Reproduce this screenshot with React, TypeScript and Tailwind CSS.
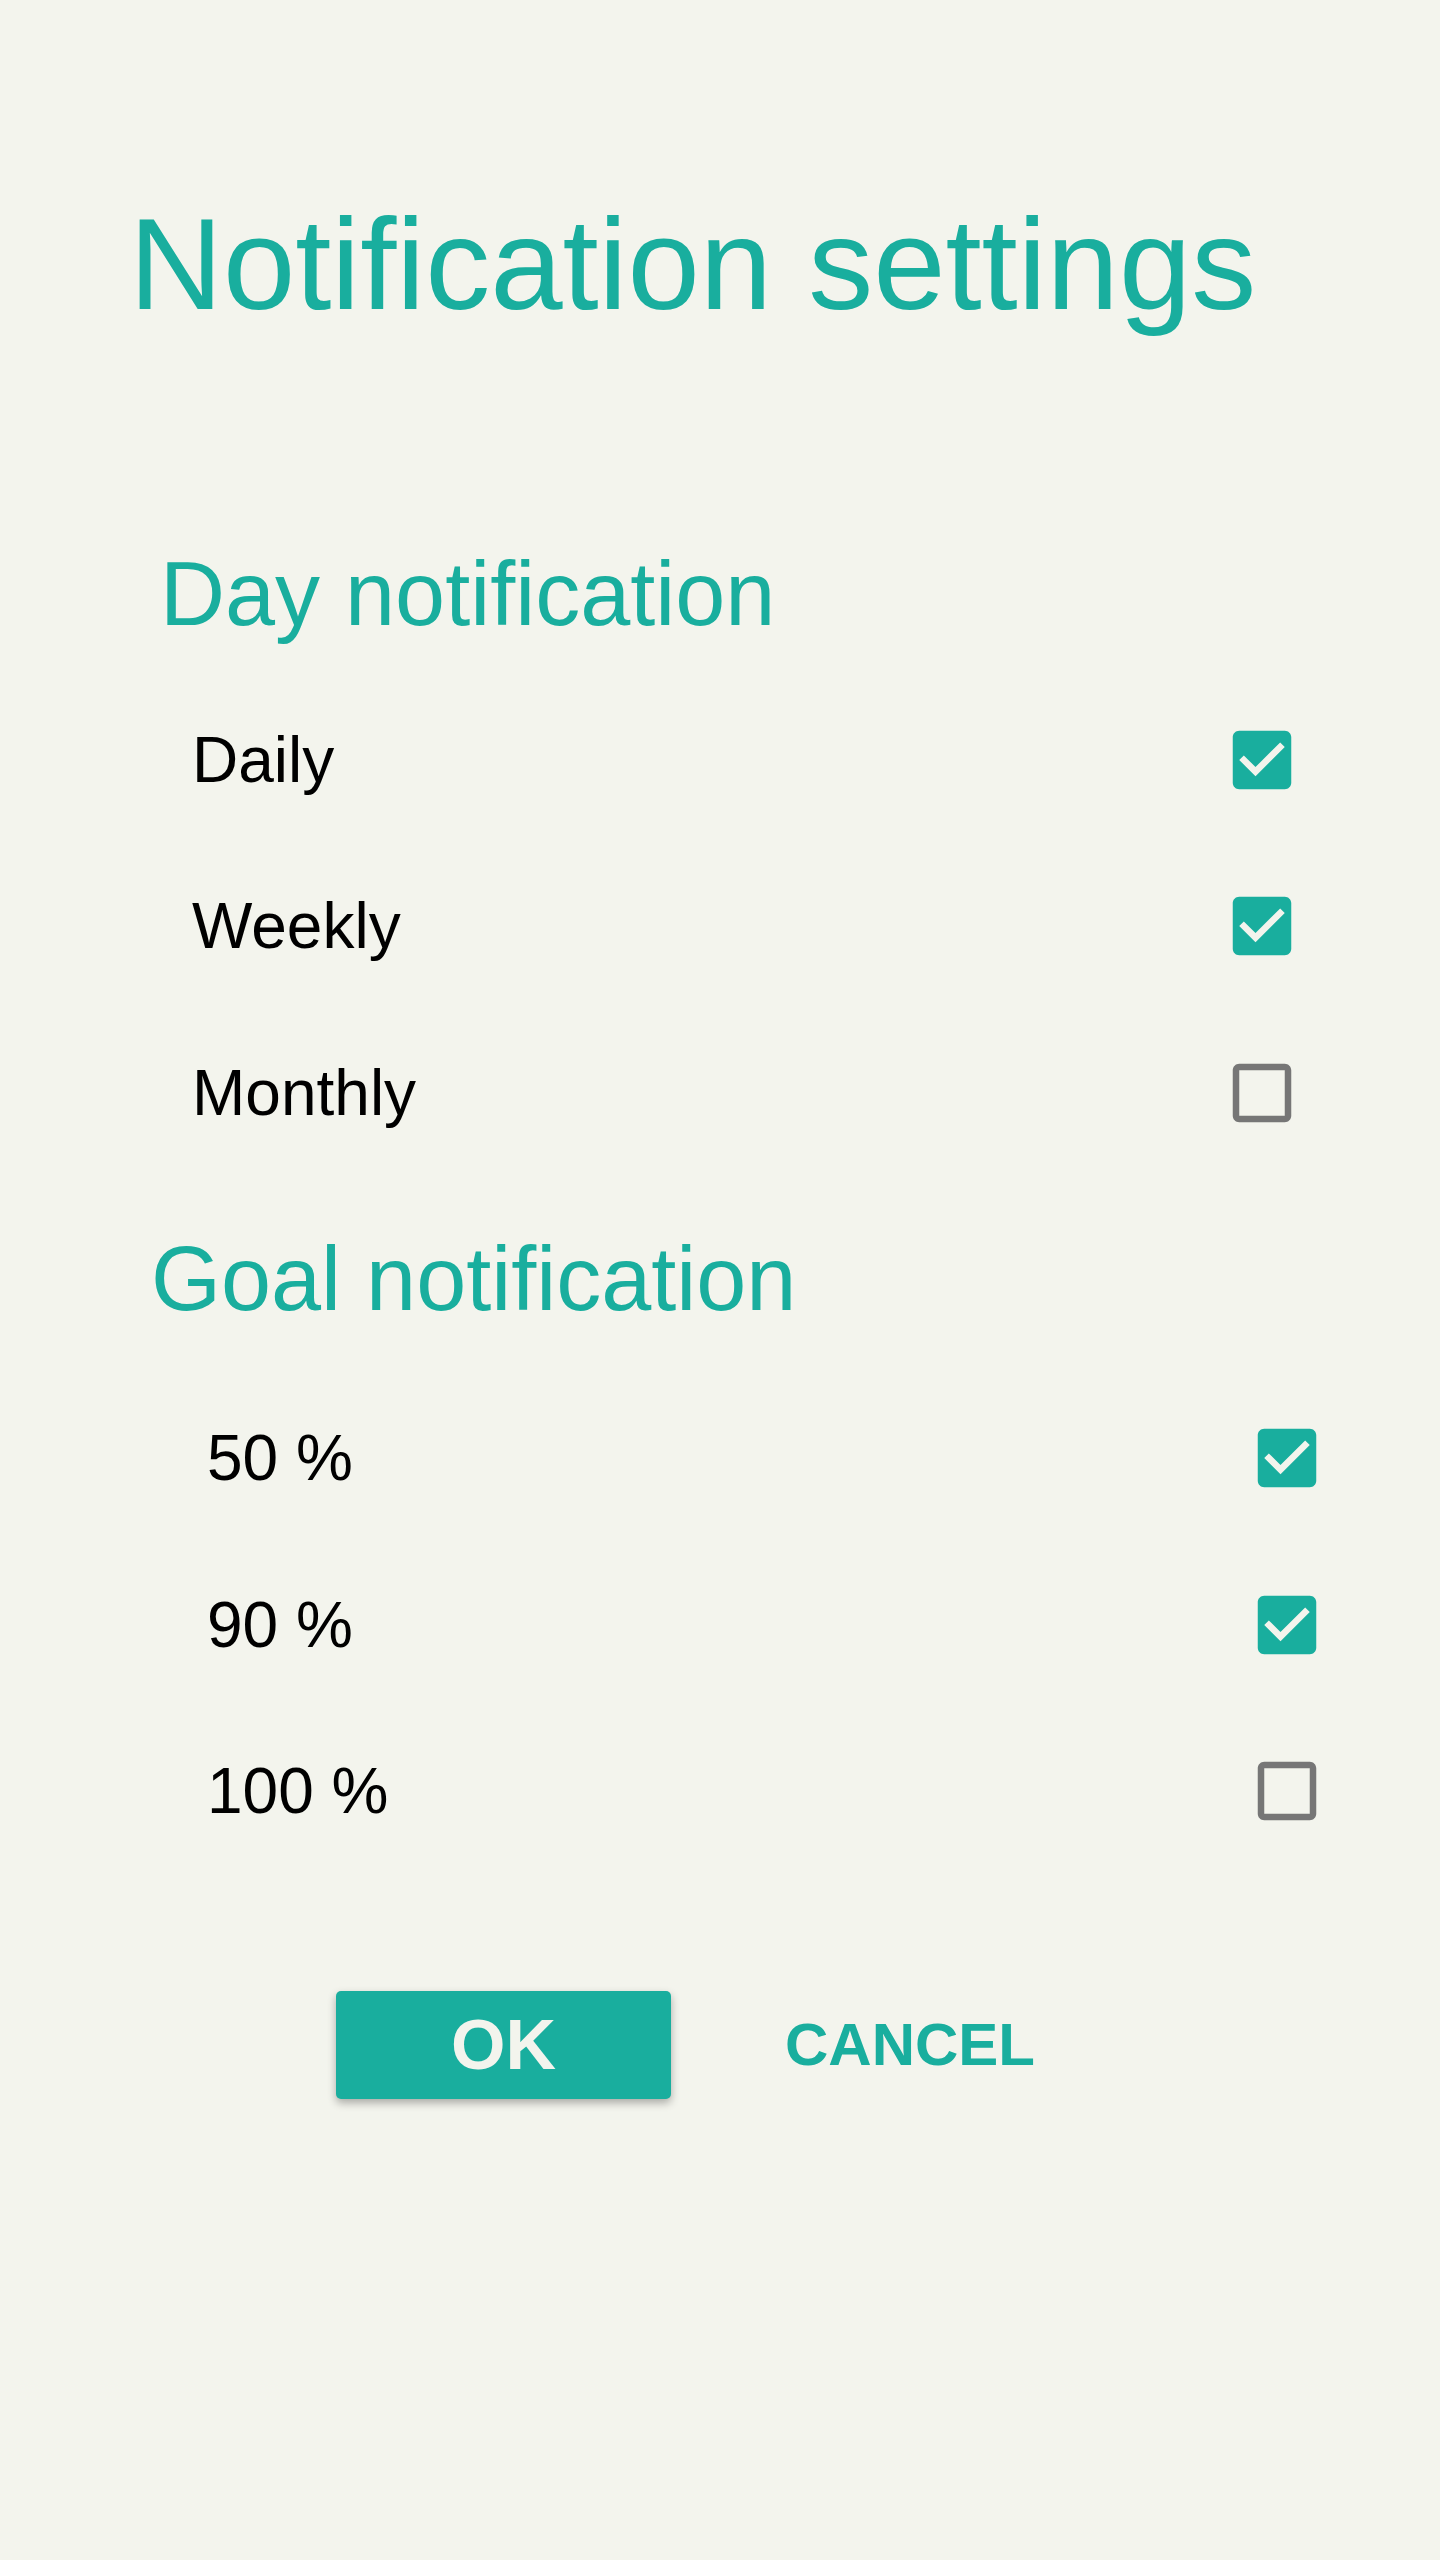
import React from "react";

function CheckBox({ checked }: { checked: boolean }) {
  if (checked) {
    return (
      <svg viewBox="0 0 24 24" className="w-[78px] h-[78px] shrink-0 fill-[#19ae9e]">
        <path d="M19 3H5c-1.11 0-2 .9-2 2v14c0 1.1.89 2 2 2h14c1.11 0 2-.9 2-2V5c0-1.1-.89-2-2-2zm-9 14l-5-5 1.41-1.41L10 14.17l7.59-7.59L19 8l-9 9z" />
      </svg>
    );
  }
  return (
    <svg viewBox="0 0 24 24" className="w-[78px] h-[78px] shrink-0 fill-[#767676]">
      <path d="M19 5v14H5V5h14m0-2H5c-1.1 0-2 .9-2 2v14c0 1.1.9 2 2 2h14c1.1 0 2-.9 2-2V5c0-1.1-.9-2-2-2z" />
    </svg>
  );
}

function Row({ label, checked, goal }: { label: string; checked: boolean; goal?: boolean }) {
  return (
    <div
      className={
        goal
          ? "flex items-center justify-between h-[166.5px] pl-[207px] w-[1326px]"
          : "flex items-center justify-between h-[166.5px] pl-[192px] w-[1301px]"
      }
    >
      <span className="text-[64px] text-black">{label}</span>
      <CheckBox checked={checked} />
    </div>
  );
}

export default function App() {
  return (
    <div className="min-h-[2560px] w-full bg-[#f3f4ed] pt-[199px] font-['Liberation_Sans',Arial,sans-serif]">
      <h1 className="pl-[129px] text-[130px] leading-none text-[#19ae9e] whitespace-nowrap">
        Notification settings
      </h1>

      <h2 className="mt-[220px] pl-[160px] text-[90px] leading-none text-[#19ae9e]">
        Day notification
      </h2>
      <div className="mt-[37.5px]">
        <Row label="Daily" checked />
        <Row label="Weekly" checked />
        <Row label="Monthly" checked={false} />
      </div>

      <h2 className="mt-[58px] pl-[151px] text-[90px] leading-none text-[#19ae9e]">
        Goal notification
      </h2>
      <div className="mt-[51px]">
        <Row label="50 %" checked goal />
        <Row label="90 %" checked goal />
        <Row label="100 %" checked={false} goal />
      </div>

      <div className="mt-[116px] flex items-center pl-[336px]">
        <button className="w-[335px] h-[108px] rounded-[5px] bg-[#19ae9e] text-[#f3f4ed] text-[70px] font-bold leading-none flex items-center justify-center shadow-[0_4px_8px_rgba(0,0,0,0.3)]">
          OK
        </button>
        <span className="ml-[114px] text-[60px] font-bold leading-none text-[#19ae9e]">CANCEL</span>
      </div>
    </div>
  );
}
